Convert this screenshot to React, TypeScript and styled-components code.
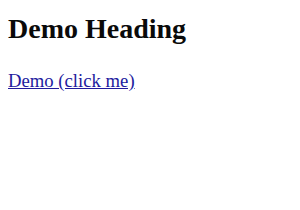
import styled, { createGlobalStyle } from "styled-components";

const Global = createGlobalStyle`
  body {
    margin: 0;
    background: #ffffff;
    font-family: "Liberation Serif", "Times New Roman", serif;
  }
`;

const Page = styled.div`
  padding: 13px 8px;
`;

const Heading = styled.h2`
  margin: 0 0 25px;
  font-size: 28px;
  font-weight: bold;
  color: #0a0a0a;
`;

const DemoLink = styled.a`
  font-size: 18.7px;
  color: #221a9e;
  text-decoration: underline;
  cursor: pointer;
`;

function App() {
  return (
    <>
      <Global />
      <Page>
        <Heading>Demo Heading</Heading>
        <DemoLink href="#" onClick={(e) => e.preventDefault()}>
          Demo (click me)
        </DemoLink>
      </Page>
    </>
  );
}

export default App;
